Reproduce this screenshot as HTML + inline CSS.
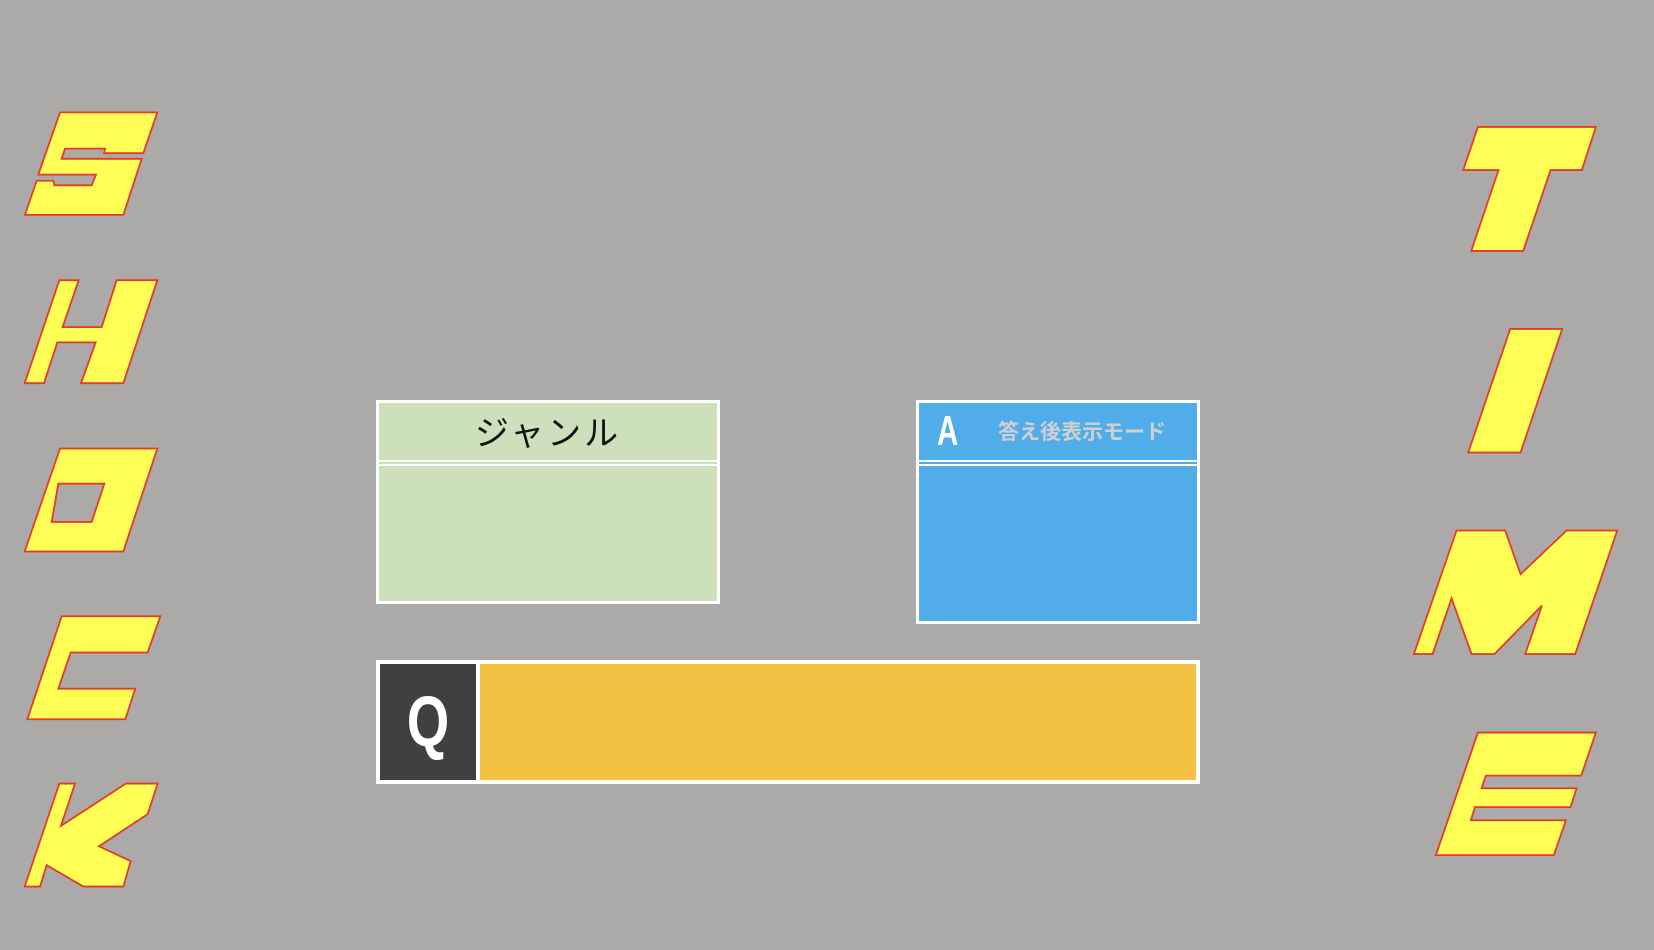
<!DOCTYPE html>
<html><head><meta charset="utf-8"><style>
html,body{margin:0;padding:0}
body{width:1654px;height:950px;background:#abaaa8;position:relative;overflow:hidden;font-family:"Liberation Sans","Noto Sans CJK JP",sans-serif}
.box{position:absolute;box-sizing:border-box;border:3px solid #fff}
.hl{position:absolute;left:0;right:0;height:2px;background:#fff}
</style></head><body>
<svg width="1654" height="950" viewBox="0 0 1568 901" preserveAspectRatio="none" style="position:absolute;left:0;top:0">
<g fill="#ffff55" stroke="#e53a2a" fill-rule="evenodd" transform="matrix(0.316,0,0,0.4837,0,85.3)">
<polygon vector-effect="non-scaling-stroke" stroke-width="1.8" points="180,44 472,44 430,124 312,124 316,115 195,115 185,135 425,135 370,245 75,245 110,178 160,178 163,187 275,187 288,166 115,166"/>
<polygon vector-effect="non-scaling-stroke" stroke-width="1.8" points="178,373 236,373 188,465 305,465 350,373 472,373 370,575 243,575 287,495 172,495 132,575 74,575"/>
<path vector-effect="non-scaling-stroke" stroke-width="1.8" d="M180,703 L472,703 L370,905 L74,905 Z M175,772 L313,772 L275,847 L155,847 Z"/>
<polygon vector-effect="non-scaling-stroke" stroke-width="1.8" points="185,1032 481,1032 443,1103 212,1103 175,1174 406,1174 376,1234 82,1234"/>
<polygon vector-effect="non-scaling-stroke" stroke-width="1.8" points="178,1360 225,1360 183,1443 378,1360 473,1360 443,1420 297,1483 392,1512 370,1562 250,1562 140,1520 120,1562 74,1562"/>
</g>
<g fill="#ffff55" stroke="#e53a2a" fill-rule="evenodd" transform="matrix(0.316,0,0,0.4595,1327.1,104.3)">
<polygon vector-effect="non-scaling-stroke" stroke-width="1.8" points="234,35 588,35 546,124 452,124 370,291 214,291 296,124 190,124"/>
<polygon vector-effect="non-scaling-stroke" stroke-width="1.8" points="331,452 487,452 362,707 205,707"/>
<polygon vector-effect="non-scaling-stroke" stroke-width="1.8" points="170,868 316,868 362,958 500,868 652,868 526,1123 376,1123 426,1023 284,1123 215,1123 155,1008 98,1123 42,1123"/>
<polygon vector-effect="non-scaling-stroke" stroke-width="1.8" points="234,1285 588,1285 544,1374 258,1374 245,1400 530,1400 512,1439 225,1439 213,1466 498,1466 462,1538 108,1538"/>
</g>
</svg>

<div class="box" style="left:376px;top:400px;width:344px;height:204px;background:#cce0bb">
  <div style="position:absolute;left:0;right:0;top:11px;text-align:center;font-size:34px;color:#111;line-height:40px;letter-spacing:3px">ジャンル</div>
  <div class="hl" style="top:57px;height:1.5px"></div>
  <div class="hl" style="top:61px;height:1.5px"></div>
</div>

<div class="box" style="left:916px;top:400px;width:284px;height:224px;background:#50adea">
  <div style="position:absolute;left:18px;top:6px;font-size:42px;font-weight:bold;color:#fff;line-height:44px;transform:scaleX(0.7);transform-origin:left">A</div>
  <div style="position:absolute;left:79px;top:17px;font-size:21px;font-weight:bold;color:#d0d0d0;line-height:26px;letter-spacing:0px">答え後表示モード</div>
  <div class="hl" style="top:57px;height:1.5px"></div>
  <div class="hl" style="top:61px;height:1.5px"></div>
</div>

<div class="box" style="left:376px;top:660px;width:824px;height:124px;background:#fff">
  <div style="position:absolute;left:1px;top:1px;width:96px;height:116px;background:#404040">
    <div style="position:absolute;left:0;right:0;top:24px;text-align:center;font-size:68px;font-weight:bold;color:#fff;line-height:68px;transform:scale(0.8,1.05)">Q</div>
  </div>
  <div style="position:absolute;left:101px;top:1px;right:1px;height:116px;background:#f4c242"></div>
</div>
</body></html>
